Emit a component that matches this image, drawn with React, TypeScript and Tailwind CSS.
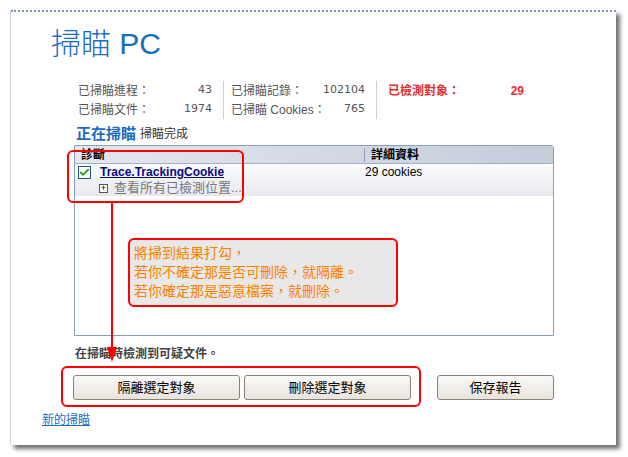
import { Check } from 'lucide-react'

const font = { fontFamily: '"Liberation Sans", "Noto Sans CJK TC", sans-serif' }

function StatRow({ label, value, w }: { label: string; value: string; w: string }) {
  return (
    <div className={`flex h-[19px] items-center justify-between ${w}`}>
      <span>{label}</span>
      <span className="font-['DejaVu_Sans'] text-[11px]">{value}</span>
    </div>
  )
}

function Button({ label, w }: { label: string; w: string }) {
  return (
    <button
      className={`h-[25px] ${w} rounded-[3px] border border-[#8a8178] bg-gradient-to-b from-[#fbfaf8] to-[#e7e3dd] text-[13px] text-black`}
    >
      {label}
    </button>
  )
}

export default function App() {
  return (
    <div className="relative h-[457px] w-[628px] bg-white text-[12px] text-[#555]" style={font}>
      <div className="ml-[10px] pt-[10px]">
        <div className="h-[435px] w-[606px] border-l border-[#d6d6d6] bg-white shadow-[4px_4px_4px_rgba(0,0,0,0.55)]">
          <div className="h-[2px] border-t-2 border-dotted border-[#7c93b8]" />
          <h1 className="ml-[40px] mt-[13px] h-[38px] text-[30px] font-light leading-[38px] text-[#1b6cc3]">掃瞄 PC</h1>

          {/* stats */}
          <div className="ml-[67px] mt-[18px] flex text-[12px] text-[#555]">
            <div className="w-[145px] pr-[11px]">
              <StatRow label="已掃瞄進程：" value="43" w="w-[134px]" />
              <StatRow label="已掃瞄文件：" value="1974" w="w-[134px]" />
            </div>
            <div className="w-px bg-[#d9d0c8]" />
            <div className="w-[152px] pl-[7px] pr-[9px]">
              <StatRow label="已掃瞄記錄：" value="102104" w="w-[134px]" />
              <StatRow label="已掃瞄 Cookies：" value="765" w="w-[134px]" />
            </div>
            <div className="w-px bg-[#d9d0c8]" />
            <div className="pl-[11px]">
              <div className="flex h-[19px] w-[136px] items-center justify-between font-bold text-[#e0302f]">
                <span>已檢測對象：</span>
                <span className="text-[12px]">29</span>
              </div>
            </div>
          </div>

          <div className="ml-[65px] mt-[6px] flex h-[18px] items-center gap-[4px]">
            <span className="text-[15px] font-bold text-[#1b6cc3]">正在掃瞄</span>
            <span className="text-[12px] text-[#333]">掃瞄完成</span>
          </div>

          {/* results table */}
          <div className="ml-[63px] mt-[2px] h-[191px] w-[480px] rounded-tr-[3px] border border-[#89a0bd] bg-white">
            <div className="flex h-[17px] items-center bg-gradient-to-r from-[#e4e7ee] to-[#c5ccda] text-[12px] font-bold text-black">
              <div className="w-[289px] pl-[6px]">診斷</div>
              <div className="h-[14px] w-px bg-[#8ea0ba]" />
              <div className="pl-[6px]">詳細資料</div>
            </div>
            <div className="h-[33px] border-t border-[#9fb1c8] bg-gradient-to-b from-[#fafbfc] to-[#e8e9ee]">
              <div className="flex h-[16px] items-center">
                <div className="ml-[3px] flex h-[13px] w-[13px] items-center justify-center border border-[#1c5180] bg-white">
                  <Check className="h-[11px] w-[11px] text-[#21a121]" strokeWidth={4} />
                </div>
                <span className="ml-[9px] w-[265px] text-[12px] font-bold text-[#0a0a80] underline">Trace.TrackingCookie</span>
                <span className="text-[12px] text-black">29 cookies</span>
              </div>
              <div className="flex h-[16px] items-center pl-[24px] text-[13px] text-[#777]">
                <span className="mr-[6px] flex h-[9px] w-[9px] items-center justify-center border border-[#555] bg-white text-[9px] leading-none text-black">+</span>
                查看所有已檢測位置...
              </div>
            </div>
          </div>

          <div className="ml-[64px] mt-[9px] text-[12px] font-bold text-[#444]">在掃瞄時檢測到可疑文件。</div>

          <div className="ml-[62px] mt-[12px] flex">
            <Button label="隔離選定對象" w="w-[167px]" />
            <div className="w-[4px]" />
            <Button label="刪除選定對象" w="w-[167px]" />
            <div className="w-[26px]" />
            <Button label="保存報告" w="w-[117px]" />
          </div>

          <a href="#" className="ml-[31px] mt-[11px] block w-fit text-[12px] text-[#1b6cc3] underline">新的掃瞄</a>
        </div>
      </div>

      {/* annotations */}
      <div className="absolute left-[67px] top-[150px] h-[53px] w-[177px] rounded-[6px] border-2 border-[#f00]" />
      <div className="absolute left-[111px] top-[202px] h-[148px] w-[2px] bg-[#f00]" />
      <div className="absolute left-[107px] top-[347px] h-0 w-0 border-x-[5px] border-t-[15px] border-x-transparent border-t-[#f00]" />
      <div className="absolute left-[128px] top-[238px] h-[69px] w-[270px] rounded-[6px] border-2 border-[#f00] bg-[#e8e8e8] pl-[4px] pt-[4px] text-[14px] leading-[19px] text-[#ff7f00]">
        <div>將掃到結果打勾，</div>
        <div>若你不確定那是否可刪除，就隔離。</div>
        <div>若你確定那是惡意檔案，就刪除。</div>
      </div>
      <div className="absolute left-[61px] top-[366px] h-[41px] w-[360px] rounded-[6px] border-2 border-[#f00]" />
    </div>
  )
}
